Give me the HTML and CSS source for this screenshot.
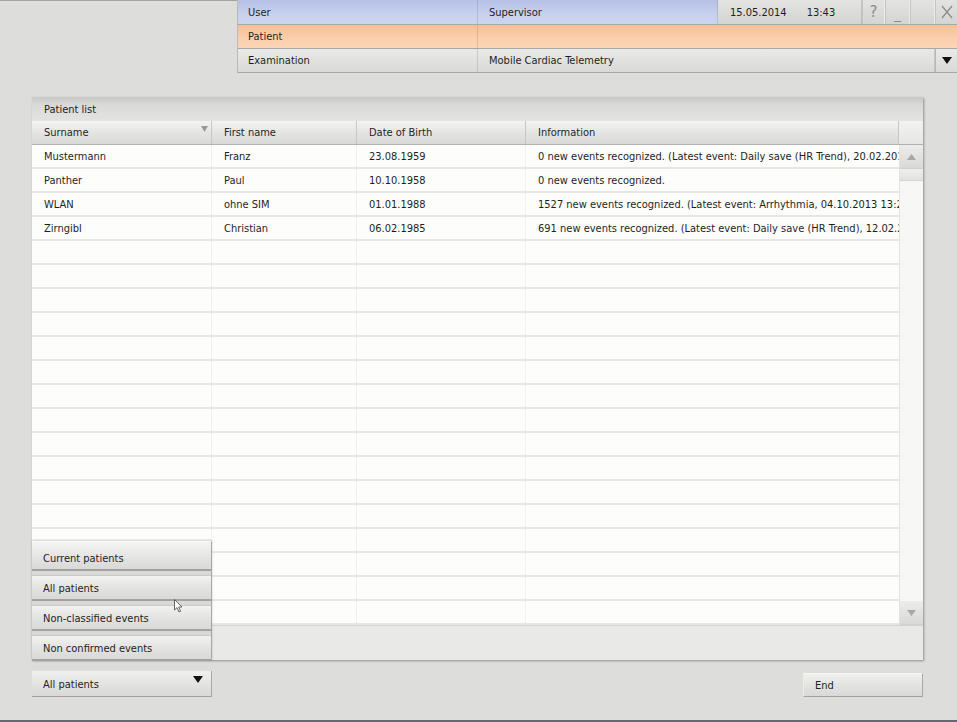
FILE: index.html
```html
<!DOCTYPE html>
<html lang="en">
<head>
<meta charset="utf-8">
<title>Patient list</title>
<link rel="stylesheet" href="styles.css">
</head>
<body>
<div class="app">
  <header class="topbar">
    <div class="trow row-user">
      <div class="cell label">User</div>
      <div class="cell value">Supervisor</div>
      <div class="cell datetime"><span>15.05.2014</span><span>13:43</span></div>
      <div class="cell winbtn">?</div>
      <div class="cell winbtn minimize">_</div>
      <div class="cell winbtn"></div>
      <div class="cell winbtn close">
        <svg width="12" height="14" viewBox="0 0 12 14"><path d="M1 1 L11 13 M11 1 L1 13" stroke="#8a8a8a" stroke-width="1.2" fill="none"/></svg>
      </div>
    </div>
    <div class="trow row-patient">
      <div class="cell label">Patient</div>
      <div class="cell value"></div>
    </div>
    <div class="trow row-exam">
      <div class="cell label">Examination</div>
      <div class="cell value">Mobile Cardiac Telemetry</div>
      <div class="cell dd">
        <svg width="10" height="7" viewBox="0 0 10 7"><path d="M0 0 H10 L5 7 Z" fill="#111"/></svg>
      </div>
    </div>
  </header>

  <section class="panel">
    <div class="panel-title">Patient list</div>
    <div class="thead">
      <div class="th sorted">Surname
        <svg class="sort" width="7" height="6" viewBox="0 0 7 6"><path d="M0 0 H7 L3.5 6 Z" fill="#9a9a9a"/></svg>
      </div>
      <div class="th">First name</div>
      <div class="th">Date of Birth</div>
      <div class="th">Information</div>
      <div class="th th-scroll"></div>
    </div>
    <div class="tbody">
      <div class="rows">
        <div class="tr"><div class="td">Mustermann</div><div class="td">Franz</div><div class="td">23.08.1959</div><div class="td">0 new events recognized. (Latest event: Daily save (HR Trend), 20.02.2014 10:12)</div></div>
        <div class="tr"><div class="td">Panther</div><div class="td">Paul</div><div class="td">10.10.1958</div><div class="td">0 new events recognized.</div></div>
        <div class="tr"><div class="td">WLAN</div><div class="td">ohne SIM</div><div class="td">01.01.1988</div><div class="td">1527 new events recognized. (Latest event: Arrhythmia, 04.10.2013 13:21)</div></div>
        <div class="tr"><div class="td">Zirngibl</div><div class="td">Christian</div><div class="td">06.02.1985</div><div class="td">691 new events recognized. (Latest event: Daily save (HR Trend), 12.02.2014 09:40)</div></div>
        <div class="tr"><div class="td"></div><div class="td"></div><div class="td"></div><div class="td"></div></div>
        <div class="tr"><div class="td"></div><div class="td"></div><div class="td"></div><div class="td"></div></div>
        <div class="tr"><div class="td"></div><div class="td"></div><div class="td"></div><div class="td"></div></div>
        <div class="tr"><div class="td"></div><div class="td"></div><div class="td"></div><div class="td"></div></div>
        <div class="tr"><div class="td"></div><div class="td"></div><div class="td"></div><div class="td"></div></div>
        <div class="tr"><div class="td"></div><div class="td"></div><div class="td"></div><div class="td"></div></div>
        <div class="tr"><div class="td"></div><div class="td"></div><div class="td"></div><div class="td"></div></div>
        <div class="tr"><div class="td"></div><div class="td"></div><div class="td"></div><div class="td"></div></div>
        <div class="tr"><div class="td"></div><div class="td"></div><div class="td"></div><div class="td"></div></div>
        <div class="tr"><div class="td"></div><div class="td"></div><div class="td"></div><div class="td"></div></div>
        <div class="tr"><div class="td"></div><div class="td"></div><div class="td"></div><div class="td"></div></div>
        <div class="tr"><div class="td"></div><div class="td"></div><div class="td"></div><div class="td"></div></div>
        <div class="tr"><div class="td"></div><div class="td"></div><div class="td"></div><div class="td"></div></div>
        <div class="tr"><div class="td"></div><div class="td"></div><div class="td"></div><div class="td"></div></div>
        <div class="tr"><div class="td"></div><div class="td"></div><div class="td"></div><div class="td"></div></div>
        <div class="tr"><div class="td"></div><div class="td"></div><div class="td"></div><div class="td"></div></div>
      </div>
      <div class="scrollbar">
        <div class="sb-btn">
          <svg width="9" height="6" viewBox="0 0 9 6"><path d="M0 6 H9 L4.5 0 Z" fill="#a8a8a8"/></svg>
        </div>
        <div class="sb-thumb"></div>
        <div class="sb-track"></div>
        <div class="sb-btn">
          <svg width="9" height="6" viewBox="0 0 9 6"><path d="M0 0 H9 L4.5 6 Z" fill="#a8a8a8"/></svg>
        </div>
      </div>
    </div>
    <div class="panel-foot"></div>

    <div class="popup">
      <div class="pbtn first">Current patients</div>
      <div class="pbtn">All patients</div>
      <div class="pbtn">Non-classified events</div>
      <div class="pbtn">Non confirmed events</div>
    </div>
    <svg class="cursor" width="9" height="14" viewBox="0 0 9 14"><path d="M0.5 0.5 V11 L3 8.6 L5 13 L6.6 12.3 L4.7 8 H8 Z" fill="#fff" stroke="#555" stroke-width="0.9"/></svg>
  </section>

  <div class="bottom">
    <div class="select">All patients
      <svg width="10" height="7" viewBox="0 0 10 7"><path d="M0 0 H10 L5 7 Z" fill="#111"/></svg>
    </div>
    <div class="endbtn">End</div>
  </div>
</div>
</body>
</html>
```

FILE: styles.css
```css
* { box-sizing: border-box; }

html, body {
  margin: 0;
  padding: 0;
}

body {
  background: #dcdcda;
  font-family: "DejaVu Sans Condensed", "DejaVu Sans", sans-serif;
  font-size: 11px;
  color: #1f1f1f;
}

.app {
  width: 957px;
  height: 722px;
  display: flex;
  flex-direction: column;
  border-bottom: 2px solid #626973;
  background-color: #dddddb;
  background-image: linear-gradient(#a3a3a1, #a3a3a1);
  background-size: 100% 1px;
  background-repeat: no-repeat;
}

/* ---------- top bar ---------- */
.topbar {
  margin-left: 237px;
  width: 720px;
  display: flex;
  flex-direction: column;
  border-left: 1px solid #b9b9b7;
}

.trow {
  display: grid;
  height: 24px;
  border-bottom: 1px solid #a7a7a5;
}

.row-user {
  height: 25px;
  grid-template-columns: 240px 240px 144px 23px 25px 25px 22px;
  background: linear-gradient(#b6c1e5, #c8d1ee 60%, #ccd4ef);
}

.row-patient {
  grid-template-columns: 240px 1fr;
  background: linear-gradient(#f7bf96, #fbcfae 60%, #fcd6b8);
}

.row-exam {
  grid-template-columns: 240px 1fr 22px;
  background: linear-gradient(#e9e9e7, #d9d9d7);
}

.cell {
  display: flex;
  align-items: center;
  padding-left: 10px;
  border-right: 1px solid rgba(120, 120, 120, 0.25);
  white-space: nowrap;
  overflow: hidden;
}

.cell:last-child { border-right: none; }

.cell.value { padding-left: 11px; }

.row-patient .cell { border-right-color: rgba(160, 110, 80, 0.25); }

.datetime {
  background: linear-gradient(#e3e3e1, #d4d4d2);
  padding-left: 12px;
  gap: 20px;
}

.winbtn {
  background: linear-gradient(#e3e3e1, #d4d4d2);
  justify-content: center;
  padding-left: 0;
  color: #8c8c8c;
  font-family: "DejaVu Sans", sans-serif;
  font-size: 15px;
  border-left: 1px solid #c4c4c2;
  border-right: 1px solid #ececea;
}

.winbtn.minimize { align-items: flex-end; padding-bottom: 2px; font-size: 14px; }
.winbtn.close { border-right: none; }

.dd {
  justify-content: center;
  padding-left: 0;
  border-left: 1px solid #b8b8b6;
}

/* ---------- panel ---------- */
.panel {
  position: relative;
  margin-top: 24px;
  margin-left: 32px;
  width: 891px;
  height: 563px;
  display: flex;
  flex-direction: column;
  box-shadow: 1px 1px 2px rgba(0, 0, 0, 0.35);
  background: #e9e9e7;
}

.panel-title {
  height: 24px;
  display: flex;
  align-items: center;
  padding-left: 12px;
  background: linear-gradient(#c8c8c6, #dadad8 35%, #e3e3e1);
  color: #222;
}

.thead {
  display: grid;
  grid-template-columns: 180px 145px 169px 373px 24px;
  height: 24px;
  background: linear-gradient(#f4f4f2, #e4e4e2 50%, #d9d9d7);
  border-bottom: 1px solid #b2b2b0;
}

.th {
  position: relative;
  display: flex;
  align-items: center;
  padding-left: 12px;
  border-right: 1px solid #c7c7c5;
  color: #262626;
}

.th-scroll {
  border-right: none;
  background: linear-gradient(#f2f2f0, #e6e6e4);
}

.sort {
  position: absolute;
  right: 3px;
  top: 5px;
}

.tbody {
  display: flex;
  height: 480px;
}

.rows {
  width: 867px;
  display: flex;
  flex-direction: column;
  background: #fdfdfc;
}

.tr {
  display: grid;
  grid-template-columns: 180px 145px 169px 373px;
  height: 24px;
  border-bottom: 2px solid #e6e6e4;
}

.td {
  display: flex;
  align-items: center;
  padding-left: 12px;
  padding-right: 2px;
  white-space: nowrap;
  overflow: hidden;
  border-right: 1px solid #f1f1ef;
  color: #1f1f1f;
}

.td:last-child { border-right: none; }

.scrollbar {
  width: 24px;
  display: flex;
  flex-direction: column;
  background: #f7f7f6;
  border-left: 1px solid #e3e3e1;
}

.sb-btn {
  height: 24px;
  display: flex;
  align-items: center;
  justify-content: center;
  background: linear-gradient(#ececea, #d9d9d7);
  border-bottom: 1px solid #d0d0ce;
}

.sb-thumb {
  height: 12px;
  background: linear-gradient(#eeeeec, #e2e2e0);
  border-bottom: 1px solid #d4d4d2;
}

.sb-track { flex: 1; }

.panel-foot {
  flex: 1;
  background: #e9e9e7;
  border-top: 1px solid #d3d3d1;
}

/* ---------- popup menu ---------- */
.popup {
  position: absolute;
  left: 0;
  top: 444px;
  width: 180px;
  display: flex;
  flex-direction: column;
  box-shadow: 0 -1px 2px rgba(0, 0, 0, 0.2);
  background: #dcdcda;
}

.pbtn {
  height: 30px;
  display: flex;
  align-items: center;
  padding-left: 11px;
  padding-top: 6px;
  background: linear-gradient(#d9d9d7 0, #d9d9d7 4px, #c9c9c7 4px, #c9c9c7 5px, #f2f2f0 5px, #e3e3e1 60%, #d9d9d7);
  border-bottom: 2px solid #a2a2a0;
  border-right: 1px solid #a8a8a6;
  color: #1f1f1f;
}

.pbtn.first {
  background: linear-gradient(#f4f4f2, #e6e6e4 50%, #d9d9d7);
  border-top: 1px solid #fafafa;
}

.cursor {
  position: absolute;
  left: 142px;
  top: 502px;
}

/* ---------- bottom ---------- */
.bottom {
  margin-top: 11px;
  margin-left: 32px;
  width: 891px;
  display: flex;
  justify-content: space-between;
  align-items: flex-start;
}

.select {
  width: 180px;
  height: 26px;
  display: flex;
  align-items: center;
  justify-content: space-between;
  padding-left: 11px;
  padding-right: 8px;
  padding-top: 2px;
  background: linear-gradient(#f1f1ef, #e3e3e1 50%, #d9d9d7);
  border-bottom: 1px solid #a2a2a0;
  border-right: 1px solid #a8a8a6;
}

.select svg { margin-top: -10px; }

.endbtn {
  margin-top: 2px;
  width: 120px;
  height: 24px;
  display: flex;
  align-items: center;
  padding-left: 11px;
  background: linear-gradient(#f1f1ef, #e3e3e1 50%, #d9d9d7);
  border-bottom: 1px solid #a2a2a0;
  border-right: 1px solid #a8a8a6;
  border-top: 1px solid #f6f6f4;
  border-left: 1px solid #ececea;
}
```
